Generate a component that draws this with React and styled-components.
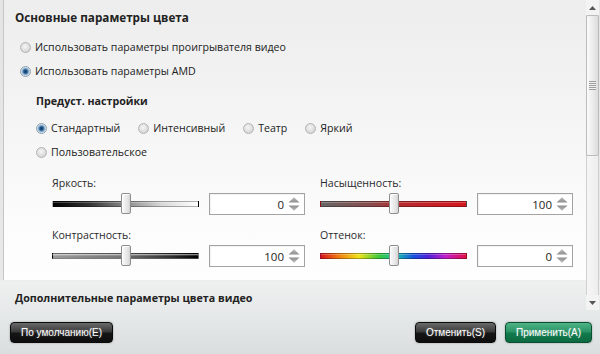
import React from 'react';
import styled, { createGlobalStyle, css } from 'styled-components';

const GlobalStyle = createGlobalStyle`
  html, body { margin: 0; padding: 0; }
  body {
    font-family: "Open Sans", "Noto Sans", sans-serif;
    font-size: 10.6px;
    color: #1e1e1e;
  }
`;

const Window = styled.div`
  width: 600px;
  height: 354px;
  display: flex;
  flex-direction: column;
  overflow: hidden;
  background: linear-gradient(to bottom, #e4e4e4 0px, #e8e8e8 280px, #eef0f0 281px, #e6e9e9 315px, #dadede 354px);
`;

const ScrollArea = styled.div`
  height: 310px;
  display: flex;
`;

const Viewport = styled.div`
  flex: 1;
  padding-left: 3px;
  overflow: hidden;
`;

const Panel = styled.section`
  height: 280px;
  box-sizing: border-box;
  border-left: 1px solid #c6c6c6;
  background: linear-gradient(to bottom, #ededed 0%, #f4f4f4 40%, #fbfbfb 75%, #fefefe 100%);
  padding: 9px 0 13px 11px;
`;

const SectionTitle = styled.div`
  font-weight: 700;
  font-size: ${p => p.$size || 10.7}px;
  line-height: 16px;
  color: #222;
`;

const RadioGroup = styled.div`
  display: flex;
  flex-direction: ${p => (p.$row ? 'row' : 'column')};
  column-gap: 18px;
  padding-left: ${p => p.$indent || 0}px;
  margin-top: ${p => p.$mt || 0}px;
`;

const RadioLabel = styled.label`
  display: flex;
  align-items: center;
  height: 24px;
  line-height: 16px;
  color: #222;
`;

const RadioDot = styled.span`
  width: 11px;
  height: 11px;
  box-sizing: border-box;
  border-radius: 50%;
  margin-right: 4px;
  flex: none;
  border: 1px solid #b4b4b4;
  background: radial-gradient(circle at 45% 40%, #f6f6f6 0, #e2e2e2 45%, #c9c9c9 100%);
  ${p =>
    p.$checked &&
    css`
      border-color: #8f9fae;
      background: radial-gradient(circle at 50% 50%, #17436e 0, #1f5283 1.6px, #5f8fbd 2.6px, #a9c6df 3.6px, #dfe6ec 4.4px);
    `}
`;

const Presets = styled.div`
  margin-left: 21px;
  margin-top: 10px;
`;

const Grid = styled.div`
  display: grid;
  grid-template-columns: 253px 253px;
  column-gap: 15px;
  row-gap: 12px;
  margin-left: 16px;
  margin-top: 11px;
`;

const Field = styled.div`
  display: flex;
  flex-direction: column;
`;

const FieldLabel = styled.div`
  line-height: 16px;
  margin-bottom: 2px;
  color: #2a2a2a;
`;

const FieldRow = styled.div`
  display: flex;
  align-items: center;
  gap: 10px;
  height: 22px;
`;

const Slider = styled.div`
  position: relative;
  width: 147px;
  height: 22px;
  display: flex;
  align-items: center;
`;

const Track = styled.div`
  width: 100%;
  height: 6px;
  box-sizing: border-box;
  border: 1px solid rgba(0, 0, 0, 0.3);
  background: ${p => p.$bg};
  box-shadow: inset 0 1px 0 rgba(255, 255, 255, 0.25);
`;

const Thumb = styled.div`
  position: absolute;
  top: 0;
  width: 10px;
  height: 21px;
  box-sizing: border-box;
  border: 1px solid #8d8d8d;
  border-radius: 2px;
  background: linear-gradient(to right, #fbfbfb, #e4e4e4 70%, #d4d4d4);
  box-shadow: inset 1px 1px 0 #fff;
`;

const SpinBox = styled.div`
  width: 96px;
  height: 22px;
  box-sizing: border-box;
  border: 1px solid #a3a3a3;
  background: #fff;
  box-shadow: inset 1px 1px 1px rgba(0, 0, 0, 0.06);
  display: flex;
  align-items: center;
  gap: 4px;
  padding-right: 4px;
`;

const SpinValue = styled.span`
  flex: 1;
  text-align: right;
  font-size: 11.5px;
  color: #222;
`;

const SpinArrows = styled.div`
  display: flex;
  flex-direction: column;
  gap: 2px;
  width: 12px;
`;

const Arrow = ({ down }) => (
  <svg width="12" height="6" viewBox="0 0 12 6">
    <defs>
      <linearGradient id={down ? 'ad' : 'au'} x1="0" y1="0" x2="0" y2="1">
        <stop offset="0" stopColor={down ? '#8e8e8e' : '#bdbdbd'} />
        <stop offset="1" stopColor={down ? '#bdbdbd' : '#8e8e8e'} />
      </linearGradient>
    </defs>
    <polygon
      points={down ? '0.5,0.5 11.5,0.5 6,5.8' : '6,0.2 11.5,5.5 0.5,5.5'}
      fill={`url(#${down ? 'ad' : 'au'})`}
    />
  </svg>
);

const Section2Title = styled(SectionTitle)`
  margin-left: 12px;
  margin-top: 10px;
`;

const Scrollbar = styled.div`
  width: 13px;
  margin-right: 1px;
  display: flex;
  flex-direction: column;
  background: #f0f0f0;
`;

const ScrollButton = styled.div`
  height: 15px;
  flex: none;
  display: flex;
  align-items: center;
  justify-content: center;
  background: #f3f3f3;
`;

const ScrollTrack = styled.div`
  flex: 1;
  box-sizing: border-box;
  border-left: 1px solid #cfcfcf;
  border-right: 1px solid #cfcfcf;
  background: linear-gradient(to right, #f6f6f6, #ededed);
  display: flex;
  flex-direction: column;
`;

const ScrollThumb = styled.div`
  height: 141px;
  margin: 0 -1px;
  box-sizing: border-box;
  border: 1px solid #bcbcbc;
  border-radius: 2px;
  background: linear-gradient(to right, #fbfbfb, #e9e9e9 60%, #dcdcdc);
  display: flex;
  align-items: center;
  justify-content: center;
`;

const Grip = styled.div`
  width: 7px;
  height: 9px;
  background: repeating-linear-gradient(to bottom, #8a8a8a 0 1px, #f0f0f0 1px 2px);
  opacity: 0.8;
`;

const ButtonBar = styled.div`
  flex: 1;
  display: flex;
  align-items: flex-start;
  padding: 12px 8px 0 10px;
`;

const Button = styled.button`
  height: 21px;
  padding: 0 10px;
  border-radius: 4px;
  font-family: "Liberation Sans", Arial, sans-serif;
  font-size: 10px;
  color: #fff;
  text-shadow: 0 0 2px rgba(255, 255, 255, 0.35);
  cursor: pointer;
  border: 1px solid #0b0b0b;
  background: linear-gradient(to bottom, #6a6a6a 0%, #3a3a3a 45%, #151515 55%, #0d0d0d 100%);
  box-shadow: 0 0 2px rgba(0, 0, 0, 0.35);
  margin-left: ${p => p.$ml || '0'};
  ${p =>
    p.$green &&
    css`
      border-color: #0b4f31;
      background: linear-gradient(to bottom, #4fb487 0%, #2a9466 45%, #117a4c 55%, #0c6a41 100%);
    `}
`;

const sliders = [
  { label: 'Яркость:', value: '0', bg: 'linear-gradient(to right, #000 0%, #333 25%, #8a8a8a 50%, #d8d8d8 75%, #fff 100%)' },
  { label: 'Насыщенность:', value: '100', bg: 'linear-gradient(to right, #666 0%, #8a4a4a 35%, #b52a2e 55%, #d4161e 100%)' },
  { label: 'Контрастность:', value: '100', bg: 'linear-gradient(to bottom, rgba(255,255,255,0.45), rgba(255,255,255,0) 60%), linear-gradient(to right, #9a9a9a 0%, #777 45%, #333 80%, #000 100%)' },
  { label: 'Оттенок:', value: '0', bg: 'linear-gradient(to right, #d8141c 0%, #f07a10 12%, #f0e21a 26%, #3cc83a 40%, #18c0b0 52%, #1850e0 64%, #5020d8 74%, #c21ec8 86%, #e01048 100%)' },
];

function Radio({ checked, children }) {
  return (
    <RadioLabel>
      <RadioDot $checked={checked} />
      {children}
    </RadioLabel>
  );
}

export default function App() {
  return (
    <>
      <GlobalStyle />
      <Window>
        <ScrollArea>
          <Viewport>
            <Panel>
              <SectionTitle $size={11.7}>Основные параметры цвета</SectionTitle>
              <RadioGroup $mt={10} $indent={5}>
                <Radio>Использовать параметры проигрывателя видео</Radio>
                <Radio checked>Использовать параметры AMD</Radio>
              </RadioGroup>
              <Presets>
                <SectionTitle>Предуст. настройки</SectionTitle>
                <RadioGroup $row $mt={7}>
                  <Radio checked>Стандартный</Radio>
                  <Radio>Интенсивный</Radio>
                  <Radio>Театр</Radio>
                  <Radio>Яркий</Radio>
                </RadioGroup>
                <RadioGroup>
                  <Radio>Пользовательское</Radio>
                </RadioGroup>
                <Grid>
                  {sliders.map(s => (
                    <Field key={s.label}>
                      <FieldLabel>{s.label}</FieldLabel>
                      <FieldRow>
                        <Slider>
                          <Track $bg={s.bg} />
                          <Thumb style={{ left: 'calc(50% - 5px)' }} />
                        </Slider>
                        <SpinBox>
                          <SpinValue>{s.value}</SpinValue>
                          <SpinArrows>
                            <Arrow />
                            <Arrow down />
                          </SpinArrows>
                        </SpinBox>
                      </FieldRow>
                    </Field>
                  ))}
                </Grid>
              </Presets>
            </Panel>
            <Section2Title>Дополнительные параметры цвета видео</Section2Title>
          </Viewport>
          <Scrollbar>
            <ScrollButton>
              <svg width="7" height="4" viewBox="0 0 7 4"><polygon points="3.5,0 7,4 0,4" fill="#555" /></svg>
            </ScrollButton>
            <ScrollTrack>
              <ScrollThumb>
                <Grip />
              </ScrollThumb>
            </ScrollTrack>
            <ScrollButton>
              <svg width="7" height="4" viewBox="0 0 7 4"><polygon points="0,0 7,0 3.5,4" fill="#555" /></svg>
            </ScrollButton>
          </Scrollbar>
        </ScrollArea>
        <ButtonBar>
          <Button>По умолчанию(E)</Button>
          <Button $ml="auto">Отменить(S)</Button>
          <Button $ml="9px" $green>Применить(A)</Button>
        </ButtonBar>
      </Window>
    </>
  );
}
